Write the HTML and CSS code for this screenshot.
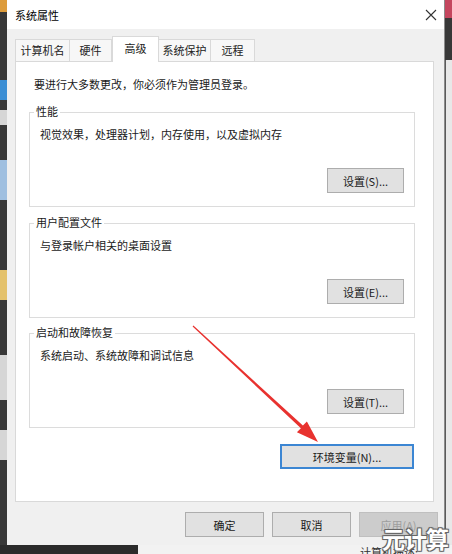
FILE: index.html
```html
<!DOCTYPE html>
<html lang="zh-CN">
<head>
  <meta charset="UTF-8" />
  <title>系统属性</title>
  <meta name="viewport" content="width=device-width, initial-scale=1" />
  <link rel="stylesheet" href="styles.css">
</head>
<body>
  <div class="desk">
    <div class="side side-left">
      <div class="blk b-orange h12"></div>
      <div class="blk b-dark h68"></div>
      <div class="blk b-blue h20"></div>
      <div class="blk b-dark h10"></div>
      <div class="blk b-light h15"></div>
      <div class="blk b-dark h35"></div>
      <div class="blk b-sky h40"></div>
      <div class="blk b-dark h70"></div>
      <div class="blk b-yellow h30"></div>
      <div class="blk b-dark h55"></div>
      <div class="blk b-light h45"></div>
      <div class="blk b-dark h30"></div>
      <div class="blk b-light h30"></div>
      <div class="blk b-dark fill"></div>
    </div>

    <div class="window">
      <div class="titlebar">
        <span class="title">系统属性</span>
        <svg class="close" width="12" height="12" viewBox="0 0 12 12">
          <path d="M1 1 L11 11 M11 1 L1 11" stroke="#333" stroke-width="1.1" fill="none" />
        </svg>
      </div>

      <div class="tabs">
        <div class="tab t1">计算机名</div>
        <div class="tab t2">硬件</div>
        <div class="tab t3 active">高级</div>
        <div class="tab t4">系统保护</div>
        <div class="tab t5">远程</div>
      </div>

      <div class="panel">
        <div class="intro">要进行大多数更改，你必须作为管理员登录。</div>

        <div class="group">
          <span class="group-title">性能</span>
          <div class="group-desc">视觉效果，处理器计划，内存使用，以及虚拟内存</div>
          <button class="btn btn-set">设置(S)...</button>
        </div>

        <div class="group">
          <span class="group-title">用户配置文件</span>
          <div class="group-desc">与登录帐户相关的桌面设置</div>
          <button class="btn btn-set">设置(E)...</button>
        </div>

        <div class="group g3">
          <span class="group-title">启动和故障恢复</span>
          <div class="group-desc">系统启动、系统故障和调试信息</div>
          <button class="btn btn-set">设置(T)...</button>
        </div>

        <button class="btn btn-env">环境变量(N)...</button>
      </div>

      <div class="actions">
        <button class="btn btn-act">确定</button>
        <button class="btn btn-act">取消</button>
        <button class="btn btn-act" disabled>应用(A)</button>
      </div>
    </div>

    <div class="side side-right">
      <div class="blk b-pink h18"></div>
      <div class="blk b-dark h42"></div>
      <div class="blk b-pale fill"></div>
    </div>
  </div>

  <div class="bottom">
    <div class="bottom-dark"></div>
    <div class="bottom-light"><span class="bottom-text">计算机描述:</span></div>
  </div>

  <svg class="arrow" width="452" height="554" viewBox="0 0 452 554">
    <polygon points="193.4,325.6 302.9,425.6 306.9,421.6 318,442 296.9,432.3 300.9,428.3 192.6,326.4" fill="#e8322f" />
  </svg>

  <div class="watermark">元计算</div>
</body>
</html>
```

FILE: styles.css
```css
body {
  margin: 0;
  width: 452px;
  height: 554px;
  overflow: hidden;
  background: #2d2d2d;
  font-family: "Noto Sans CJK SC", "Microsoft YaHei", sans-serif;
  font-size: 11px;
  color: #1a1a1a;
  position: relative;
}
.desk {
  display: flex;
  height: 545px;
}
.side {
  width: 7px;
  display: flex;
  flex-direction: column;
}
.blk { flex-shrink: 0; }
.fill { flex: 1; }
.h10 { height: 10px; }
.h12 { height: 12px; }
.h15 { height: 15px; }
.h18 { height: 18px; }
.h20 { height: 20px; }
.h30 { height: 30px; }
.h35 { height: 35px; }
.h40 { height: 40px; }
.h42 { height: 42px; }
.h45 { height: 45px; }
.h55 { height: 55px; }
.h68 { height: 68px; }
.h70 { height: 70px; }
.b-orange { background: #dd9c3c; }
.b-dark { background: #383838; }
.b-blue { background: #3b8ed4; }
.b-light { background: #d6d6d6; }
.b-sky { background: #9fbfe0; }
.b-yellow { background: #e4c26c; }
.b-pink { background: #c4465e; }
.b-pale { background: #e8e8e8; }

.window {
  width: 437px;
  background: #f0f0f0;
  border-right: 1px solid #8c8c8c;
  display: flex;
  flex-direction: column;
}
.titlebar {
  height: 29px;
  background: #fff;
  display: flex;
  align-items: center;
  justify-content: space-between;
  padding: 0 7px 0 8px;
}
.title {
  color: #000;
  line-height: 16px;
}
.close { display: block; }

.tabs {
  height: 32px;
  display: flex;
  align-items: flex-end;
  padding-left: 8px;
  position: relative;
  z-index: 1;
}
.tab {
  height: 22px;
  line-height: 21px;
  background: #f7f7f7;
  border: 1px solid #d9d9d9;
  border-bottom: none;
  box-sizing: border-box;
  text-align: center;
  color: #222;
}
.tab + .tab { border-left: none; }
.t1 { width: 55px; }
.t2 { width: 42px; }
.t3 { width: 47px; }
.t4 { width: 52px; }
.t5 { width: 44px; }
.tab.active {
  height: 26px;
  line-height: 22px;
  background: #fff;
  border-left: 1px solid #d9d9d9;
  margin-bottom: -1px;
}
.tab.active + .tab { border-left: none; }

.panel {
  margin: 0 10px 0 8px;
  height: 441px;
  box-sizing: border-box;
  background: #fff;
  border: 1px solid #d9d9d9;
  padding: 14px 18px 0 13px;
  display: flex;
  flex-direction: column;
}
.intro {
  line-height: 16px;
  margin-left: 5px;
}
.group {
  margin-top: 20px;
  height: 95px;
  box-sizing: border-box;
  border: 1px solid #dcdcdc;
  padding: 0 10px 13px 10px;
  display: flex;
  flex-direction: column;
}
.group + .group { margin-top: 16px; }
.group.g3 { margin-top: 15px; }
.group-title {
  align-self: flex-start;
  margin: -10px 0 0 -6px;
  padding: 0 2px;
  background: #fff;
  line-height: 16px;
}
.group-desc {
  margin-top: 7px;
  line-height: 16px;
}
.btn {
  font-family: inherit;
  font-size: 11px;
  color: #1a1a1a;
  background: #e1e1e1;
  border: 1px solid #adadad;
  height: 25px;
  padding: 0;
  box-sizing: border-box;
}
.btn-set {
  width: 77px;
  margin-top: auto;
  align-self: flex-end;
}
.btn-env {
  width: 134px;
  margin-top: 16px;
  margin-right: 1px;
  align-self: flex-end;
  border: 2px solid #3c86d3;
}
.actions {
  display: flex;
  justify-content: flex-end;
  gap: 8px;
  padding: 10px 6px 0 0;
}
.btn-act { width: 79px; }
.btn-act:disabled {
  background: #cccccc;
  border-color: #bfbfbf;
  color: #9e9e9e;
}

.side-right .b-pale { border-left: 1px solid #5a5a5a; }

.bottom {
  display: flex;
  height: 9px;
}
.bottom-dark {
  width: 138px;
  background: #2b2b2b;
}
.bottom-light {
  flex: 1;
  background: #f2f2f2;
  overflow: hidden;
}
.bottom-text {
  display: block;
  margin: 1px 0 0 222px;
  line-height: 12px;
  color: #333;
}

.arrow {
  position: absolute;
  left: 0;
  top: 0;
  pointer-events: none;
}
.watermark {
  position: absolute;
  right: 4px;
  bottom: 2px;
  font-size: 23px;
  font-weight: bold;
  line-height: 27px;
  color: #fff;
  letter-spacing: -1px;
  text-shadow: -1px -1px 0 #666, 1px -1px 0 #666, -1px 1px 0 #666, 1px 1px 0 #666, 0 0 2px #444;
}
```
